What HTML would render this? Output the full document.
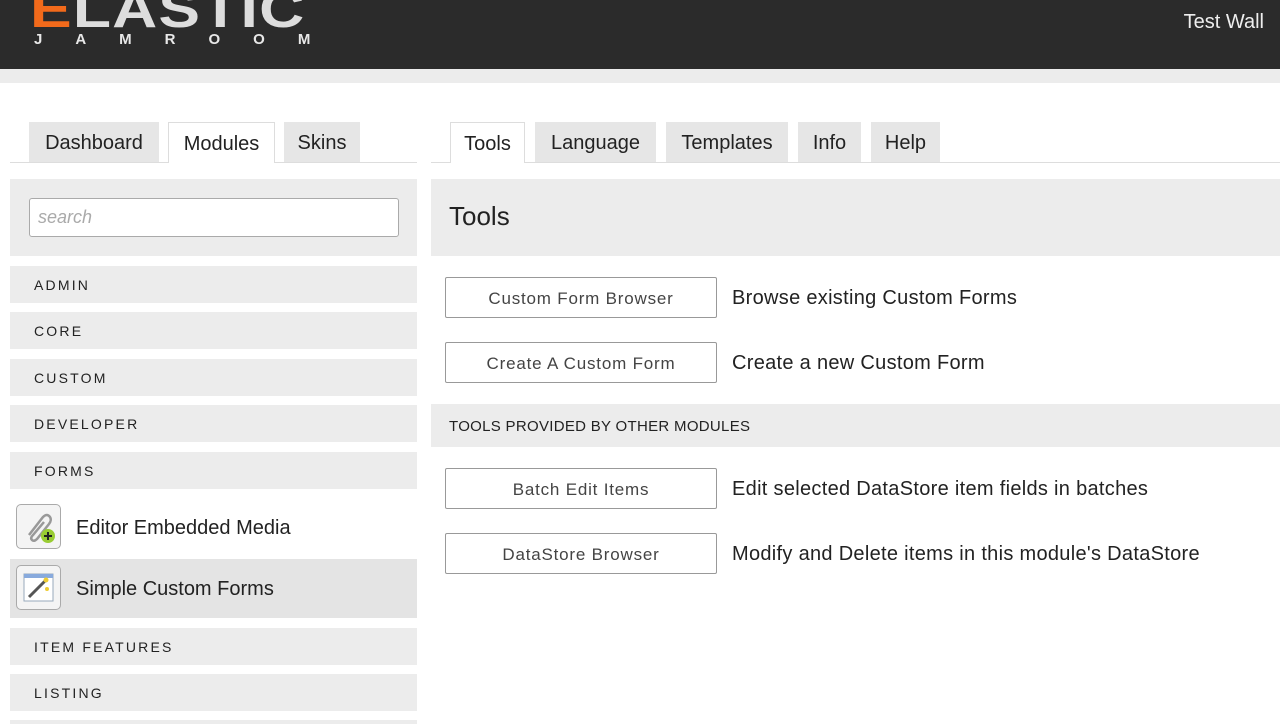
<!DOCTYPE html>
<html><head><style>
html,body{margin:0;width:1280px;height:724px;overflow:hidden}
body{background:#fff;font-family:"Liberation Sans",sans-serif;position:relative}
.hdr{position:absolute;left:0;top:0;width:1280px;height:69px;background:#2b2b2b;overflow:hidden}
.band{position:absolute;left:0;top:69px;width:1280px;height:14px;background:#ececec}
.logo{position:absolute;left:30px;top:-20px;color:#ddd;font:bold 52px "Liberation Sans",sans-serif;letter-spacing:1px;transform:scaleX(1.2);transform-origin:left top}
.logo b{color:#f26a1b}
.jam{position:absolute;left:34px;top:31px;color:#e8e8e8;font:bold 15px "Liberation Sans",sans-serif;letter-spacing:33px}
.user{position:absolute;right:16px;top:11px;color:#eee;font-size:20px}
.tab{position:absolute;top:122px;height:40px;background:#e6e6e6;font-size:20px;color:#222;line-height:42px;text-align:center;box-sizing:border-box}
.tab.act{background:#fff;border:1px solid #ddd;border-bottom:none;height:41px}
.line{position:absolute;top:162px;height:1px;background:#ddd}
.box{position:absolute;background:#ececec}
.cat{position:absolute;left:10px;width:407px;height:37px;background:#ececec;font-size:14px;letter-spacing:2.2px;color:#222;line-height:39px;padding-left:24px;box-sizing:border-box}
.mod{position:absolute;left:10px;width:407px;height:59px;font-size:20px;color:#222;line-height:61px;padding-left:66px;box-sizing:border-box}
.ic{position:absolute;left:6px;top:6px;width:45px;height:45px;border:1px solid #aaa;border-radius:5px;background:#f4f4f4;box-sizing:border-box}
.btn{position:absolute;left:445px;width:272px;height:41px;border:1px solid #999;border-radius:2px;box-sizing:border-box;text-align:center;line-height:42px;font-size:17px;letter-spacing:0.8px;color:#444;background:#fff}
.desc{position:absolute;left:732px;font-size:20px;letter-spacing:0.3px;color:#222;line-height:43px}
</style></head><body>
<div class="hdr"><div class="logo"><b>E</b>LASTIC</div><div class="jam">JAMROOM</div><div class="user">Test Wall</div></div>
<div class="band"></div>
<div class="line" style="left:10px;width:407px"></div>
<div class="line" style="left:431px;width:849px"></div>
<div class="tab" style="left:29px;width:130px">Dashboard</div>
<div class="tab act" style="left:168px;width:107px">Modules</div>
<div class="tab" style="left:284px;width:76px">Skins</div>
<div class="tab act" style="left:450px;width:75px">Tools</div>
<div class="tab" style="left:535px;width:121px">Language</div>
<div class="tab" style="left:666px;width:122px">Templates</div>
<div class="tab" style="left:798px;width:63px">Info</div>
<div class="tab" style="left:871px;width:69px">Help</div>
<div class="box" style="left:10px;top:179px;width:407px;height:77px"></div>
<div style="position:absolute;left:29px;top:198px;width:370px;height:39px;border:1px solid #aaa;border-radius:3px;background:#fff;box-sizing:border-box;font-size:18px;font-style:italic;color:#aaa;padding-left:8px;line-height:37px">search</div>
<div class="cat" style="top:266px">ADMIN</div>
<div class="cat" style="top:312px">CORE</div>
<div class="cat" style="top:359px">CUSTOM</div>
<div class="cat" style="top:405px">DEVELOPER</div>
<div class="cat" style="top:452px">FORMS</div>
<div class="mod" style="top:498px"><div class="ic"><svg width="43" height="43"><path d="M12 30 L26 12 Q30 8 33 12 Q35 15 32 19 L20 34 Q17 37 15 35 Q13 33 16 30 L27 17" fill="none" stroke="#999" stroke-width="2.5"/><circle cx="31" cy="31" r="7" fill="#9c3"/><path d="M31 27v8M27 31h8" stroke="#222" stroke-width="2"/></svg></div>Editor Embedded Media</div>
<div class="mod" style="top:559px;background:#e4e4e4"><div class="ic"><svg width="43" height="43"><rect x="7" y="8" width="29" height="27" fill="#fff" stroke="#9ab"/><rect x="7" y="8" width="29" height="4" fill="#8ad"/><path d="M12 31 L28 15" stroke="#555" stroke-width="3"/><circle cx="29" cy="14" r="2.5" fill="#ec3"/><circle cx="30" cy="23" r="2" fill="#ec3"/></svg></div>Simple Custom Forms</div>
<div class="cat" style="top:628px">ITEM FEATURES</div>
<div class="cat" style="top:674px">LISTING</div>
<div class="cat" style="top:720px"></div>
<div class="box" style="left:431px;top:179px;width:849px;height:77px"></div>
<div style="position:absolute;left:449px;top:201px;font-size:26px;color:#222">Tools</div>
<div class="btn" style="top:277px">Custom Form Browser</div><div class="desc" style="top:277px">Browse existing Custom Forms</div>
<div class="btn" style="top:342px">Create A Custom Form</div><div class="desc" style="top:342px">Create a new Custom Form</div>
<div class="box" style="left:431px;top:404px;width:849px;height:43px;font-size:15px;letter-spacing:0.3px;color:#222;line-height:45px;padding-left:18px;box-sizing:border-box">TOOLS PROVIDED BY OTHER MODULES</div>
<div class="btn" style="top:468px">Batch Edit Items</div><div class="desc" style="top:468px">Edit selected DataStore item fields in batches</div>
<div class="btn" style="top:533px">DataStore Browser</div><div class="desc" style="top:533px">Modify and Delete items in this module's DataStore</div>
</body></html>
